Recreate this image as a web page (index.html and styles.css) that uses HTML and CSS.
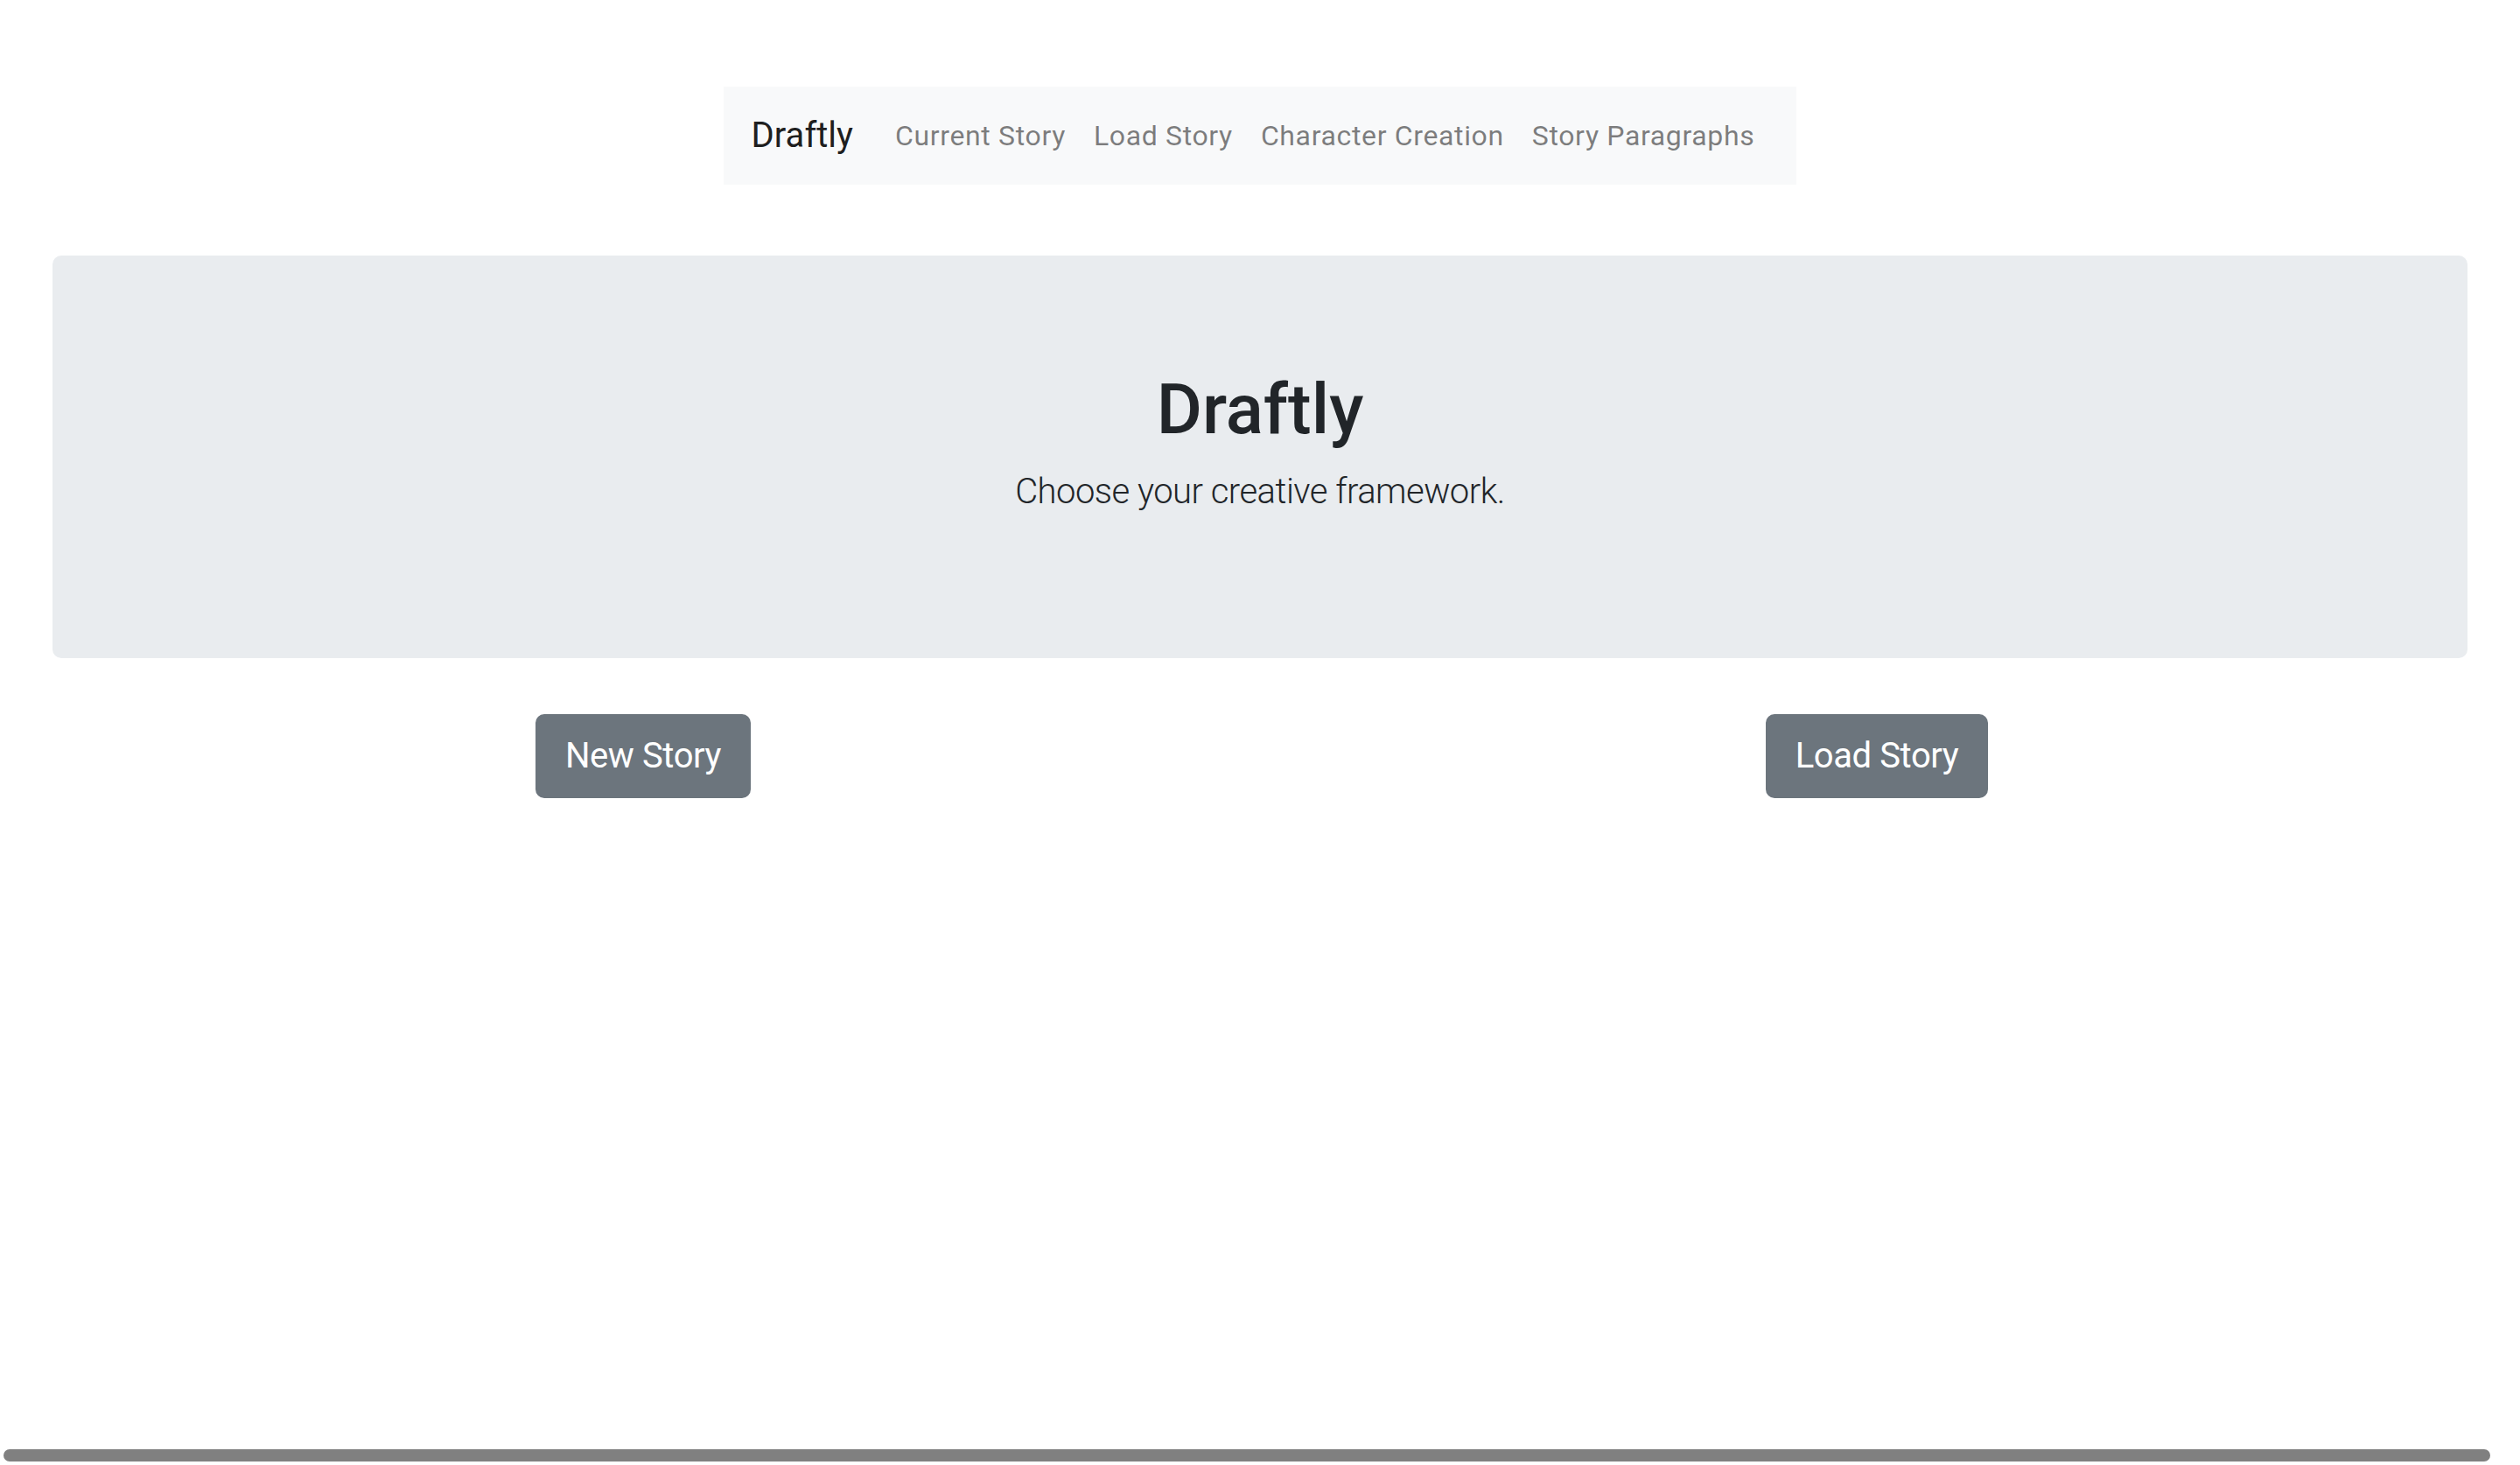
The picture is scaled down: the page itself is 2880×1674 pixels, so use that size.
FILE: index.html
```html
<!DOCTYPE html>
<html lang="en">
<head>
<meta charset="utf-8">
<title>Draftly</title>
<link rel="stylesheet" href="styles.css">
</head>
<body>
  <header class="top">
    <nav class="navbar">
      <a class="brand" href="#">Draftly</a>
      <ul class="nav">
        <li><a class="nav-link" href="#">Current Story</a></li>
        <li><a class="nav-link" href="#">Load Story</a></li>
        <li><a class="nav-link" href="#">Character Creation</a></li>
        <li><a class="nav-link" href="#">Story Paragraphs</a></li>
      </ul>
    </nav>
  </header>
  <main class="container">
    <section class="jumbotron">
      <h1 class="title">Draftly</h1>
      <p class="lead">Choose your creative framework.</p>
    </section>
    <div class="row">
      <div class="col"><button class="btn">New Story</button></div>
      <div class="col"><button class="btn">Load Story</button></div>
    </div>
  </main>
  <div class="scrollbar"></div>
</body>
</html>
```

FILE: styles.css
```css
* { box-sizing: border-box; }
html, body { margin: 0; padding: 0; }
body {
  font-family: Roboto, "Liberation Sans", Arial, sans-serif;
  font-size: 32px;
  line-height: 1.5;
  color: #212529;
  background: #fff;
  min-height: 1674px;
}
.top {
  display: flex;
  justify-content: center;
  padding-top: 99px;
}
.navbar {
  display: flex;
  align-items: center;
  background: #f8f9fa;
  padding: 16px 32px;
}
.brand {
  font-size: 40px;
  line-height: 60px;
  padding: 10px 0;
  margin-right: 32px;
  color: rgba(0,0,0,.9);
  text-decoration: none;
}
.nav {
  display: flex;
  list-style: none;
  margin: 0;
  padding: 0;
}
.nav-link {
  display: block;
  padding: 16px 16px;
  line-height: 48px;
  letter-spacing: 0.02em;
  color: rgba(0,0,0,.5);
  text-decoration: none;
}
.container {
  padding: 81px 60px 0;
}
.jumbotron {
  background: #e9ecef;
  border-radius: 10px;
  padding: 128px 64px;
  margin-bottom: 64px;
  text-align: center;
}
.title {
  margin: 0 0 16px;
  font-size: 80px;
  font-weight: 500;
  line-height: 96px;
}
.lead {
  margin: 0 0 32px;
  font-size: 40px;
  font-weight: 300;
  line-height: 60px;
  letter-spacing: -0.013em;
}
.row {
  display: flex;
  margin: 0 -30px;
}
.col {
  flex: 1 1 0;
  padding: 0 30px;
  text-align: center;
}
.btn {
  font-family: inherit;
  font-size: 40px;
  line-height: 60px;
  letter-spacing: -0.01em;
  padding: 16px 32px;
  border: 2px solid #6c757d;
  border-radius: 10px;
  background: #6c757d;
  color: #fff;
  cursor: pointer;
}
.scrollbar {
  position: fixed;
  left: 4px;
  right: 34px;
  bottom: 4px;
  height: 14px;
  border-radius: 7px;
  background: #808080;
}
```
